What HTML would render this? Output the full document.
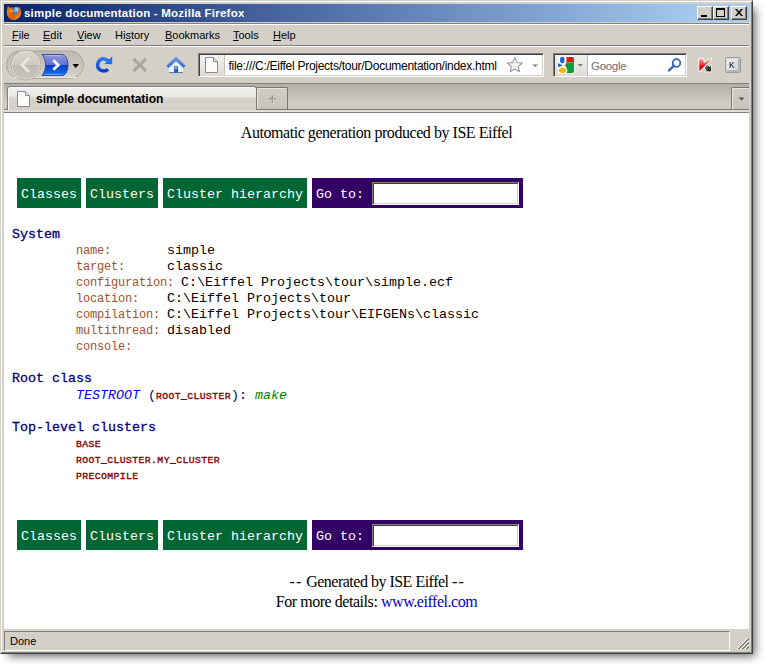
<!DOCTYPE html>
<html><head><meta charset="utf-8">
<style>
*{box-sizing:border-box}
html,body{margin:0;padding:0}
body{width:769px;height:671px;position:relative;overflow:hidden;background:#fff;font-family:"Liberation Sans",sans-serif}
.abs{position:absolute}
#shadow{position:absolute;left:8px;top:8px;width:747px;height:648px;background:rgba(0,0,0,0.62);filter:blur(5px)}
#win{position:absolute;left:0;top:0;width:753px;height:654px;background:#d4d0c8;
  border-top:1px solid #d4d0c8;border-left:1px solid #d4d0c8;border-right:1px solid #404040;border-bottom:1px solid #404040}
#win2{position:absolute;left:0;top:0;right:0;bottom:0;border-top:1px solid #fff;border-left:1px solid #fff;border-right:1px solid #808080;border-bottom:1px solid #808080}
#title{position:absolute;left:4px;top:4px;width:745px;height:18px;background:linear-gradient(to right,#0a246a,#a6caf0 94%)}
#title .t{position:absolute;left:20px;top:2.5px;font:bold 11.5px "Liberation Sans",sans-serif;color:#fff;white-space:nowrap;letter-spacing:0.22px}
.cbtn{position:absolute;top:6px;width:16px;height:14px;background:#d4d0c8;border-top:1px solid #fff;border-left:1px solid #fff;border-right:1px solid #404040;border-bottom:1px solid #404040}
.cbtn:after{content:"";position:absolute;left:0;top:0;right:0;bottom:0;border-right:1px solid #808080;border-bottom:1px solid #808080}
.menu{position:absolute;top:29px;font:11px "Liberation Sans",sans-serif;color:#000;white-space:nowrap}
.menu u{text-decoration:underline;text-underline-offset:0.5px}
.hl{position:absolute;left:4px;width:745px;height:1px}
#content{position:absolute;left:4px;top:113px;width:745px;height:516px;background:#fff;overflow:hidden}
.mono{font-family:"Liberation Mono",monospace}
.serif{font-family:"Liberation Serif",serif}
.nav{position:absolute;height:30px;background:#006633;color:#fff;font:13.33px/34px "Liberation Mono",monospace;white-space:pre;padding-left:4px}
.goto{position:absolute;height:30px;background:#330066;color:#fff;font:13.33px/34px "Liberation Mono",monospace;white-space:pre}
.ln{position:absolute;left:8px;white-space:pre;font:13.33px/16px "Liberation Mono",monospace;color:#000}
.h{color:#000080;font-weight:normal;-webkit-text-stroke:0.3px #000080}
.lb{color:#a0522d;font-size:12px;letter-spacing:-0.2px}
.sc{color:#800000;font-weight:normal;font-size:9.8px;letter-spacing:0.38px;-webkit-text-stroke:0.35px #800000}
</style></head><body>
<div id="shadow"></div>
<div id="win"><div id="win2"></div></div>

<!-- title bar -->
<div id="title">
  <svg class="abs" style="left:2px;top:1px" width="16" height="16" viewBox="0 0 16 16">
    <defs>
      <radialGradient id="glb" cx="0.6" cy="0.25" r="0.8"><stop offset="0" stop-color="#a8e4fb"/><stop offset="0.45" stop-color="#3b8ed8"/><stop offset="1" stop-color="#1a3f8c"/></radialGradient>
      <linearGradient id="fox" x1="0" y1="0" x2="1" y2="1"><stop offset="0" stop-color="#f08a1a"/><stop offset="0.6" stop-color="#e05a0c"/><stop offset="1" stop-color="#f6b52a"/></linearGradient>
    </defs>
    <circle cx="9.8" cy="6.8" r="4.9" fill="url(#glb)"/>
    <path d="M2 0.8 L3.6 3.2 C4.2 2.6 5 2.2 6 2 L5 4.2 C4 5.5 4.2 7 5.2 8 C6.8 9.6 9.2 9.8 11 8.6 C12.6 7.4 13.2 5.2 12.4 2.8 C11.8 1.8 11.4 1.5 11 1.2 C13.8 1.8 15.5 4.4 15.3 7.6 C15 11.8 11.8 15 7.8 15 C3.8 15 0.8 11.8 0.8 7.8 C0.8 5.8 1.2 3.6 2 0.8 Z" fill="url(#fox)"/>
    <path d="M2.2 1 L4 3.4 L6.8 2.6 L6.2 4.6 L8.6 5.2 L7.6 6.6 L8.4 8.6 L5.6 8.4 L3.2 9 Z" fill="#e86c10"/>
    <path d="M4 6 L6.2 5.8" stroke="#fde3a0" stroke-width="0.9"/>
    <path d="M7.2 3.6 L8.2 4.2" stroke="#5a1a08" stroke-width="0.7"/>
  </svg>
  <div class="t">simple documentation - Mozilla Firefox</div>
</div>
<div class="cbtn" style="left:697px"><div class="abs" style="left:3px;top:8px;width:6px;height:2px;background:#000"></div></div>
<div class="cbtn" style="left:713px"><div class="abs" style="left:2px;top:1px;width:9px;height:9px;border:1px solid #000;border-top-width:2px"></div></div>
<div class="cbtn" style="left:731px"><svg class="abs" style="left:3px;top:2px" width="8" height="7" viewBox="0 0 8 7"><path d="M0 0h2l2 2.5 2-2.5h2L5 3.5 8 7H6L4 4.5 2 7H0l3-3.5z" fill="#000"/></svg></div>

<!-- menubar -->
<div class="hl" style="top:23px;background:#808080"></div>
<div class="hl" style="top:24px;background:#fff"></div>
<div class="menu" style="left:12px"><u>F</u>ile</div>
<div class="menu" style="left:43px"><u>E</u>dit</div>
<div class="menu" style="left:77px"><u>V</u>iew</div>
<div class="menu" style="left:115px">Hi<u>s</u>tory</div>
<div class="menu" style="left:165px"><u>B</u>ookmarks</div>
<div class="menu" style="left:233px"><u>T</u>ools</div>
<div class="menu" style="left:273px"><u>H</u>elp</div>
<div class="hl" style="top:45px;background:#808080"></div>
<div class="hl" style="top:46px;background:#fff"></div>

<!-- toolbar -->
<svg class="abs" style="left:0;top:47px" width="200" height="36" viewBox="0 47 200 36">
  <defs>
    <linearGradient id="pill" x1="0" y1="0" x2="0" y2="1"><stop offset="0" stop-color="#bdb9b1"/><stop offset="1" stop-color="#d6d3cc"/></linearGradient>
    <linearGradient id="circ" x1="0" y1="0" x2="0" y2="1"><stop offset="0" stop-color="#dad7d1"/><stop offset="0.5" stop-color="#ccc9c2"/><stop offset="0.5" stop-color="#bebbb4"/><stop offset="1" stop-color="#c8c5be"/></linearGradient>
    <linearGradient id="fwd" x1="0" y1="0" x2="0" y2="1"><stop offset="0" stop-color="#8d98de"/><stop offset="0.48" stop-color="#6571cc"/><stop offset="0.52" stop-color="#0040c8"/><stop offset="1" stop-color="#1a72f4"/></linearGradient>
    <linearGradient id="rel" x1="0" y1="0" x2="0" y2="1"><stop offset="0" stop-color="#2a74ee"/><stop offset="1" stop-color="#0b3ec6"/></linearGradient>
  </defs>
  <rect x="6.5" y="51" width="77" height="27.5" rx="13.75" fill="url(#pill)" stroke="#a9a59e" stroke-width="1"/>
  <path d="M14 77.5 H76" stroke="#ebe9e4" stroke-width="1"/>
  <path d="M42 54.5 H62 C66 54.5 68 60 68 65 C68 70 66 75.5 62 75.5 H42 C44.5 72 45.5 68.5 45.5 65 C45.5 61.5 44.5 58 42 54.5 Z" fill="url(#fwd)" stroke="#23379a" stroke-width="0.8"/>
  <path d="M44.5 55.6 H62" stroke="#b4bcee" stroke-width="0.8"/>
  <path d="M44.5 74.4 H62.5" stroke="#5cc0ff" stroke-width="0.9"/>
  <path d="M53.3 60.2 L58.2 65 L53.3 69.8" fill="none" stroke="#f4f4f4" stroke-width="3" stroke-linejoin="miter"/>
  <circle cx="26" cy="65" r="14.3" fill="url(#circ)" stroke="#e2e0da" stroke-width="1.2"/>
  <circle cx="26" cy="65" r="15" fill="none" stroke="#a09c94" stroke-width="0.8" opacity="0.8"/>
  <path d="M29 58 L22 65 L29 72" fill="none" stroke="#ebe9e4" stroke-width="2.6"/>
  <path d="M72.5 64 H79 L75.75 68 Z" fill="#000"/>
  <!-- reload -->
  <path d="M108.4 61.2 A6.1 6.1 0 1 0 108 69.2" fill="none" stroke="url(#rel)" stroke-width="3.5"/>
  <path d="M104.3 64 L112.2 64.2 L112.2 56.3 Z" fill="#2070ec"/>
  <!-- stop -->
  <path d="M133.5 58.8 L146 71.2 M146 58.8 L133.5 71.2" stroke="#a9a6a0" stroke-width="3.2"/>
  <!-- home -->
  <linearGradient id="roof" x1="0" y1="0" x2="0" y2="1"><stop offset="0" stop-color="#6b9be8"/><stop offset="1" stop-color="#3e6acb"/></linearGradient>
  <path d="M169.2 66.5 L176 61 L182.9 66.5 V72.9 H169.2 Z" fill="#e6f3fc"/>
  <path d="M169.2 72.6 H182.9" stroke="#5566aa" stroke-width="1"/>
  <path d="M166.3 65.8 L176 56.6 L185.7 65.8 L183.4 68.1 L176 61.2 L168.6 68.1 Z" fill="url(#roof)"/>
  <rect x="174" y="66.2" width="4" height="6.6" fill="#2f5fc0"/>
  <rect x="174.8" y="67" width="2" height="1.8" fill="#a8d8f0"/>
  <rect x="177" y="70" width="1" height="1" fill="#111"/>
</svg>
<!-- url bar -->
<div class="abs" style="left:198px;top:53px;width:346px;height:24px;background:#fff;border-top:1px solid #808080;border-left:1px solid #808080;border-right:1px solid #fff;border-bottom:1px solid #fff;box-shadow:inset 1px 1px 0 #404040,inset -1px -1px 0 #d4d0c8"></div>
<div class="abs" style="left:200px;top:55px;width:25px;height:21px;background:linear-gradient(#f2f1ee,#dedbd5);border-right:1px solid #c8c5be"></div>
<svg class="abs" style="left:204px;top:56px" width="16" height="18" viewBox="0 0 16 18">
  <path d="M1.5 1.5 H9.5 L13.5 5.5 V16.5 H1.5 Z" fill="#fafafa" stroke="#8c8c8c" stroke-width="1"/>
  <path d="M9.5 1.5 V5.5 H13.5" fill="#ddd" stroke="#8c8c8c" stroke-width="1"/>
</svg>
<div class="abs" style="left:228.5px;top:59px;font:12px 'Liberation Sans',sans-serif;color:#000;white-space:nowrap;letter-spacing:-0.27px">file:///C:/Eiffel Projects/tour/Documentation/index.html</div>
<svg class="abs" style="left:505px;top:56px" width="36" height="18" viewBox="0 0 36 18">
  <path d="M9.8 1.5 L12 6.5 L17.3 7 L13.3 10.5 L14.5 15.8 L9.8 13 L5.1 15.8 L6.3 10.5 L2.3 7 L7.6 6.5 Z" fill="#f2f2f2" stroke="#9a9a9a" stroke-width="1.1" stroke-linejoin="round"/>
  <path d="M27.5 8.5 H33 L30.25 11 Z" fill="#777"/>
</svg>
<!-- search bar -->
<div class="abs" style="left:553px;top:53px;width:134px;height:24px;background:#fff;border-top:1px solid #808080;border-left:1px solid #808080;border-right:1px solid #fff;border-bottom:1px solid #fff;box-shadow:inset 1px 1px 0 #404040,inset -1px -1px 0 #d4d0c8"></div>
<div class="abs" style="left:555px;top:55px;width:33px;height:21px;background:linear-gradient(#f2f1ee,#dedbd5);border-right:1px solid #b8b5ae"></div>
<svg class="abs" style="left:557px;top:56px" width="30" height="18" viewBox="0 0 30 18">
  <rect x="0.8" y="0.3" width="16.4" height="17" fill="#fff"/>
  <path d="M9.2 1 H15.2 Q17 1 17 2.8 V6.6 H9 Q10 3.8 9.2 1 Z" fill="#ee1111"/>
  <path d="M10.5 6.4 H17 V15 Q17 17 15 17 H9.6 Q11 14.5 9.6 12 Q7.8 10.2 8.2 8.6 Q8.8 6.6 10.5 6.4 Z" fill="#119a3a"/>
  <ellipse cx="5.3" cy="4.1" rx="2.3" ry="3.3" fill="#1a66d0"/>
  <path d="M1.2 7 L5.5 9.5 L1.2 11.2 Z" fill="#1a55b8"/>
  <ellipse cx="5.5" cy="14.2" rx="3.6" ry="2.7" fill="#f5b800"/>
  <path d="M20.5 8 H26 L23.25 10.8 Z" fill="#808080"/>
</svg>
<div class="abs" style="left:591px;top:60px;font:11.5px 'Liberation Sans',sans-serif;color:#6d6d6d;white-space:nowrap;letter-spacing:-0.3px">Google</div>
<svg class="abs" style="left:666px;top:56px" width="18" height="16" viewBox="0 0 18 16">
  <circle cx="10.5" cy="7" r="3.8" fill="none" stroke="#2f66b4" stroke-width="1.8"/>
  <path d="M7.8 9.8 L3 14.5" stroke="#2f66b4" stroke-width="2.4" stroke-linecap="round"/>
</svg>
<!-- kaspersky -->
<svg class="abs" style="left:696px;top:56px" width="18" height="18" viewBox="696 56 18 18">
  <defs><linearGradient id="kr" x1="0" y1="0" x2="0" y2="1"><stop offset="0" stop-color="#f4a0a0"/><stop offset="0.45" stop-color="#ee3a3a"/><stop offset="0.55" stop-color="#e60010"/><stop offset="1" stop-color="#e60010"/></linearGradient>
  <linearGradient id="ka" x1="0" y1="0" x2="1" y2="1"><stop offset="0" stop-color="#c8c8c8"/><stop offset="0.5" stop-color="#444"/><stop offset="1" stop-color="#000"/></linearGradient></defs>
  <path d="M698.6 58.6 H703.6 L704.2 62.6 L710.6 58.6 H712.4 L699 72 Z" fill="url(#kr)" stroke="#fff" stroke-width="0.9" stroke-linejoin="round"/>
  <path d="M705.2 66.2 L707.3 64.2 L709.6 66.5 L711.4 64.8 V71.8 H704.6 L706.2 70.2 L704 68 Z" fill="url(#ka)" stroke="#fff" stroke-width="0.8" stroke-linejoin="round"/>
</svg>
<div class="abs" style="left:725px;top:57px;width:16px;height:16px;border-radius:2px;background:linear-gradient(135deg,#f0f0f0,#d4d4d4);border:1px solid #9c9c9c;box-shadow:inset 1px 1px 0 #dcdcdc,inset -2px -2px 0 #b4b4b4"></div>
<div class="abs" style="left:729px;top:60px;font:8.5px 'Liberation Sans',sans-serif;color:#000">K</div>
<div class="hl" style="top:83px;background:#808080"></div>

<!-- tab bar -->
<div class="abs" style="left:4px;top:84px;width:745px;height:25px;background:linear-gradient(#b3b0a8,#bebab2 30%,#d2cec7 80%,#cdc9c2)"></div>
<div class="abs" style="left:4px;top:109px;width:745px;height:1px;background:#7a7872"></div>
<div class="abs" style="left:4px;top:110px;width:745px;height:2px;background:#e2dfd8"></div>
<div class="abs" style="left:7px;top:86px;width:250px;height:24px;border:1px solid #808080;border-bottom:none;border-radius:3px 3px 0 0;background:linear-gradient(#f3f2ef,#e9e7e2 40%,#d6d3cc 50%,#d4d0c9);box-shadow:inset 1px 1px 0 #faf9f7"></div>
<svg class="abs" style="left:16px;top:90px" width="16" height="18" viewBox="0 0 16 18">
  <path d="M1.5 1.5 H9.5 L13.5 5.5 V16.5 H1.5 Z" fill="#fbfbfb" stroke="#8c8c8c" stroke-width="1"/>
  <path d="M9.5 1.5 V5.5 H13.5" fill="#e4e4e4" stroke="#8c8c8c" stroke-width="1"/>
</svg>
<div class="abs" style="left:36px;top:92px;font:bold 12px 'Liberation Sans',sans-serif;color:#000;white-space:nowrap">simple documentation</div>
<div class="abs" style="left:256px;top:87px;width:32px;height:22px;border:1px solid #7a7872;border-bottom:none;border-radius:2px 2px 0 0;background:linear-gradient(#d0ccc5,#c8c4bd);box-shadow:inset 1px 1px 0 #e8e6e0"></div>
<svg class="abs" style="left:267px;top:94px" width="12" height="11" viewBox="0 0 12 11">
  <path d="M5.5 1.5 V8.5 M2 5 H9" stroke="#8e8c86" stroke-width="1.5"/>
  <path d="M6.5 2 V10 M2.5 6 H10.5" stroke="#eeece8" stroke-width="0.6" opacity="0.8"/>
</svg>
<div class="abs" style="left:731px;top:87px;width:18px;height:22px;border-left:1px solid #7a7872;border-top:1px solid #7a7872;border-radius:2px 0 0 0;background:linear-gradient(#cfcbc4,#c9c5be);box-shadow:inset 1px 1px 0 #e8e6e0"></div>
<svg class="abs" style="left:738px;top:97px" width="8" height="5" viewBox="0 0 8 5"><path d="M0.5 0.5 H6.5 L3.5 3.5 Z" fill="#555"/></svg>
<div class="hl" style="top:83px;background:#808080"></div>
<div class="hl" style="top:112px;background:#808080"></div>

<!-- content -->
<div id="content">
  <div class="abs serif" style="left:0;width:745px;top:11px;text-align:center;font-size:16px;color:#000;letter-spacing:-0.45px">Automatic generation produced by ISE Eiffel</div>
  <div class="nav" style="left:13px;top:65px;width:64px">Classes</div>
  <div class="nav" style="left:82px;top:65px;width:72px">Clusters</div>
  <div class="nav" style="left:159px;top:65px;width:144px">Cluster hierarchy</div>
  <div class="goto" style="left:308px;top:65px;width:211px;padding-left:4px">Go to:</div>
  <div class="abs" style="left:368px;top:69px;width:147px;height:23px;background:#fff;border-top:1px solid #808080;border-left:1px solid #808080;border-right:1px solid #fff;border-bottom:1px solid #fff;box-shadow:inset 1px 1px 0 #404040,inset -1px -1px 0 #d4d0c8"></div>

  <div class="ln h" style="top:114px">System</div>
  <div class="ln" style="top:130px">        <span class="lb">name:        </span>simple</div>
  <div class="ln" style="top:146px">        <span class="lb">target:      </span>classic</div>
  <div class="ln" style="top:162px">        <span class="lb">configuration: </span>C:\Eiffel Projects\tour\simple.ecf</div>
  <div class="ln" style="top:178px">        <span class="lb">location:    </span>C:\Eiffel Projects\tour</div>
  <div class="ln" style="top:194px">        <span class="lb">compilation: </span>C:\Eiffel Projects\tour\EIFGENs\classic</div>
  <div class="ln" style="top:210px">        <span class="lb">multithread: </span>disabled</div>
  <div class="ln" style="top:226px">        <span class="lb">console:</span></div>

  <div class="ln h" style="top:258px">Root class</div>
  <div class="ln" style="top:275px">        <i style="color:#0000ff">TESTROOT</i><span style="color:#000080"> (</span><span class="sc">ROOT_CLUSTER</span><span style="color:#000080">): </span><i style="color:#008000">make</i></div>

  <div class="ln h" style="top:307px">Top-level clusters</div>
  <div class="ln" style="top:323px">        <span class="sc">BASE</span></div>
  <div class="ln" style="top:339px">        <span class="sc">ROOT_CLUSTER.MY_CLUSTER</span></div>
  <div class="ln" style="top:355px">        <span class="sc">PRECOMPILE</span></div>

  <div class="nav" style="left:13px;top:407px;width:64px">Classes</div>
  <div class="nav" style="left:82px;top:407px;width:72px">Clusters</div>
  <div class="nav" style="left:159px;top:407px;width:144px">Cluster hierarchy</div>
  <div class="goto" style="left:308px;top:407px;width:211px;padding-left:4px">Go to:</div>
  <div class="abs" style="left:368px;top:411px;width:147px;height:23px;background:#fff;border-top:1px solid #808080;border-left:1px solid #808080;border-right:1px solid #fff;border-bottom:1px solid #fff;box-shadow:inset 1px 1px 0 #404040,inset -1px -1px 0 #d4d0c8"></div>

  <div class="abs serif" style="left:0;width:745px;top:459px;text-align:center;font-size:16px;line-height:20px;color:#000;letter-spacing:-0.45px"><span style="letter-spacing:-0.5px"><span style="letter-spacing:1.2px">--</span> Generated by ISE Eiffel <span style="letter-spacing:1.2px">-</span>-</span><br>For more details: <span style="color:#0000cc">www.eiffel.com</span></div>
</div>

<!-- status bar -->
<div class="abs" style="left:4px;top:631px;width:726px;height:20px;border-top:1px solid #808080;border-left:1px solid #808080;border-right:1px solid #fff;border-bottom:1px solid #fff"></div>
<div class="abs" style="left:10px;top:635px;font:11px 'Liberation Sans',sans-serif;color:#000">Done</div>
<svg class="abs" style="left:0;top:0" width="769" height="671" viewBox="0 0 769 671" shape-rendering="crispEdges">
  <path d="M736.5 649.5 L748.5 637.5 M740.5 649.5 L748.5 641.5 M744.5 649.5 L748.5 645.5" stroke="#fff" stroke-width="1.1" fill="none"/>
  <path d="M737.5 649.5 L748.5 638.5 M738.5 649.5 L748.5 639.5 M741.5 649.5 L748.5 642.5 M742.5 649.5 L748.5 643.5 M745.5 649.5 L748.5 646.5 M746.5 649.5 L748.5 647.5" stroke="#808080" stroke-width="1.1" fill="none"/>
</svg>
</body></html>
